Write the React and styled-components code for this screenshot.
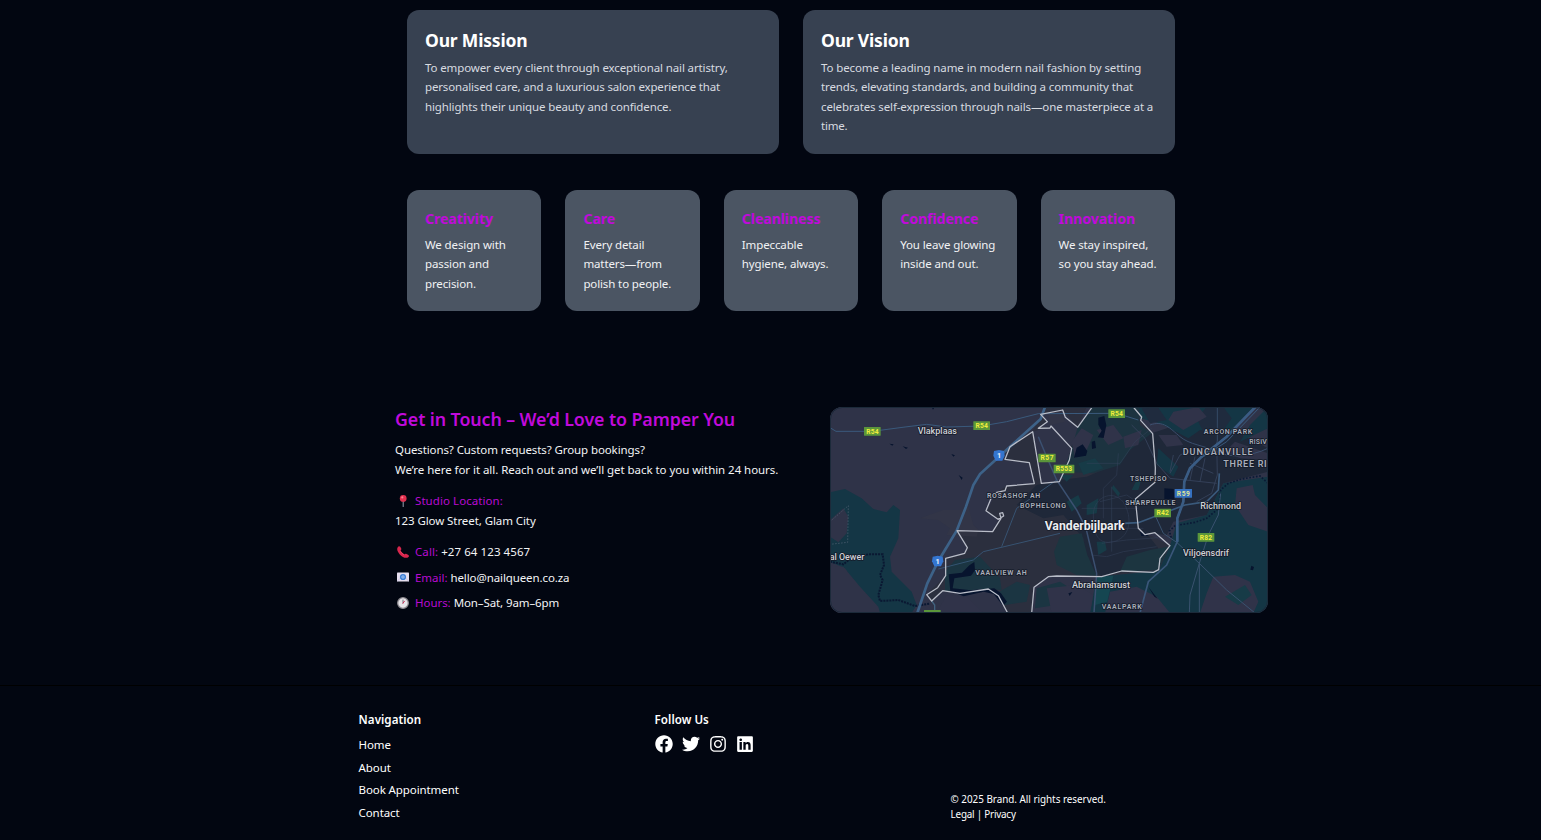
import React from "react";
import styled, { createGlobalStyle } from "styled-components";
import { FaFacebook, FaTwitter, FaInstagram, FaLinkedin } from "react-icons/fa";

const GlobalStyle = createGlobalStyle`
  *, *::before, *::after { box-sizing: border-box; }
  html { font-size: 12px; }
  body {
    margin: 0;
    height: 840px;
    overflow: hidden;
    background: #020611;
    color: #fff;
    font-family: "Segoe UI", "Noto Sans", "Open Sans", sans-serif;
    font-size: 11.5px;
    line-height: 19.5px;
    letter-spacing: -0.1px;
  }
  h2, h3, h4, p, ul { margin: 0; padding: 0; }
  ul { list-style: none; }
`;

const Page = styled.div`
  height: 840px;
  overflow: hidden;
`;

const About = styled.section`
  width: 768px;
  margin-left: 407px;
  padding-top: 10px;
  display: grid;
  gap: 36px;
`;

const Statements = styled.div`
  display: grid;
  grid-template-columns: repeat(2, 1fr);
  gap: 24px;
`;

const Values = styled.div`
  display: grid;
  grid-template-columns: repeat(5, 1fr);
  gap: 24px;
`;

const StatementCard = styled.article`
  height: 144px;
  padding: 18px;
  border-radius: 12px;
  background: #374151;
  color: #d8dbe0;
`;

const StatementTitle = styled.h3`
  margin-bottom: 5.6px;
  color: #fff;
  font-size: 17.5px;
  font-weight: 700;
  line-height: 24px;
  letter-spacing: -0.18px;
`;

const ValueCard = styled.article`
  height: 121px;
  padding: 18px;
  border-radius: 12px;
  background: #4b5563;
  color: #f1f2f4;
`;

const ValueTitle = styled.h4`
  margin-bottom: 5.6px;
  color: #c00adb;
  font-size: 14.25px;
  font-weight: 700;
  line-height: 21px;
  letter-spacing: -0.15px;
`;

const Line = styled.span`
  display: block;
  white-space: nowrap;
  letter-spacing: ${(p) => p.$track ?? -0.12}px;
`;

const Contact = styled.section`
  margin: 96px 0 0 395px;
  display: grid;
  grid-template-columns: 399px 438px;
  column-gap: 36px;
`;

const ContactTitle = styled.h2`
  margin-bottom: 9px;
  color: #c00adb;
  font-size: 17.8px;
  font-weight: 600;
  line-height: 24px;
  letter-spacing: -0.08px;
  white-space: nowrap;
`;

const Intro = styled.p`
  margin-bottom: 12px;
  color: #f3f4f6;
`;

const Details = styled.div`
  display: grid;
  gap: 6px;
  color: #f3f4f6;
`;

const Address = styled.div`
  margin-bottom: 6px;
`;

const Detail = styled.div`
  display: flex;
  align-items: center;
  height: 19.5px;
  white-space: nowrap;
`;

const Emoji = styled.svg`
  width: 12px;
  height: 12px;
  margin: 0 6px 0 2px;
  flex: none;
`;

const Label = styled.span`
  margin-right: 3px;
  color: #b80bd2;
  letter-spacing: ${(p) => p.$track ?? 0}px;
`;

const Value = styled.span`
  letter-spacing: ${(p) => p.$track ?? -0.1}px;
`;

const MapFrame = styled.div`
  height: 206px;
  border-radius: 12px;
  overflow: hidden;
  background: #2f3348;

  svg { display: block; width: 100%; height: 100%; }
  text { font-family: Roboto, "Noto Sans", sans-serif; letter-spacing: 0; }
`;

const Footer = styled.footer`
  margin-top: 72px;
  height: 155px;
  padding: 24px 0 0 358.6px;
  border-top: 1px solid #000;
  display: grid;
  grid-template-columns: repeat(3, 272px);
  align-items: start;
  column-gap: 24px;
`;

const FooterTitle = styled.h4`
  margin-bottom: 6px;
  padding-top: 1px;
  font-size: 11.6px;
  font-weight: 600;
  line-height: 18px;
  letter-spacing: 0.04px;
`;

const NavList = styled.ul`
  padding-top: 1px;
  display: grid;
  gap: 4.6px;
  line-height: 18px;
`;

const Socials = styled.div`
  display: flex;
  gap: 9px;

  svg { display: block; width: 18px; height: 18px; }
`;

const Legal = styled.div`
  margin-top: 82px;
  font-size: 9.9px;
  line-height: 15px;
`;

function Pin() {
  return (
    <Emoji viewBox="0 0 12 12">
      <path d="M6.200 6v5.600" stroke="#8b95a5" strokeWidth="1.100" strokeLinecap="round" />
      <circle cx="6.200" cy="3.400" r="3.400" fill="#e0304f" />
      <circle cx="5.300" cy="2.400" r="1.100" fill="#ff7f91" />
    </Emoji>
  );
}

function Phone() {
  return (
    <Emoji viewBox="0 0 12 12">
      <path
        d="M1.200.700C2.400-.3 3.300.4 4.200 2.400c.6 1.300-.6 1.500-.5 2.200.4 1.400 2 3 3.600 3.700.8.2 1-.9 2.200-.4 2.400 1 3 2 2 3-2.200 2.200-6 .3-8.500-2.200C.5 6.200-.9 2.600 1.200.700Z"
        fill="#d8264d"
      />
      <path d="M3.300 5.300c.8 1.500 2 2.700 3.600 3.400" stroke="#f24a6b" strokeWidth=".8" fill="none" />
    </Emoji>
  );
}

function Mail() {
  return (
    <Emoji viewBox="0 0 12 12">
      <rect x="0" y="1.600" width="12" height="9" rx=".6" fill="#e6dff0" />
      <path d="M0 10.400 4 6.500M12 10.400 8 6.500" stroke="#bdb4d4" strokeWidth=".6" />
      <circle cx="6" cy="6" r="3.100" fill="#3d7fd6" />
      <circle cx="6" cy="6" r="1.200" fill="none" stroke="#b7d3f7" strokeWidth=".8" />
    </Emoji>
  );
}

function Clock() {
  return (
    <Emoji viewBox="0 0 12 12">
      <circle cx="6" cy="6" r="5.300" fill="#e8e6ea" stroke="#8f8c92" strokeWidth="1.300" />
      <path d="M6 6.400V2.600" stroke="#55515a" strokeWidth=".8" />
      <path d="m5.700 6.600 2-2.700" stroke="#d0305a" strokeWidth="1" />
    </Emoji>
  );
}

const towns = [
  ["Vlakplaas", 322, 88, 27, 118],
  ["Richmond", 1172, 311, 27, 122],
  ["Viljoensdrif", 1128, 453, 27, 138],
  ["Abrahamsrust", 813, 548, 27, 174],
  ["al Oewer", 51, 464, 27, 104],
];

const suburbs = [
  ["ROSASHOF AH", 551, 280, 21, 160],
  ["BOPHELONG", 639, 310, 21, 138],
  ["TSHEPISO", 955, 228, 21, 110],
  ["SHARPEVILLE", 961, 300, 21, 151],
  ["VAALVIEW AH", 513, 511, 21, 155],
  ["VAALPARK", 875, 613, 21, 120],
  ["ARCON PARK", 1194, 88, 21, 145],
  ["RISIV", 1284, 118, 21, 53],
  ["DUNCANVILLE", 1163, 150, 27, 210],
  ["THREE RI", 1245, 187, 27, 130],
];

const shields = [
  ["R54", 127, 79, 50],
  ["R54", 455, 62, 50],
  ["R54", 860, 26, 50],
  ["R57", 651, 159, 52],
  ["R553", 702, 192, 62],
  ["R42", 998, 324, 50],
  ["R82", 1128, 397, 50],
  ["R59", 1060, 265, 52, "blue"],
  ["", 307, 628, 50],
];

function TownMap() {
  return (
    <svg viewBox="0 6 1314 618" preserveAspectRatio="none">
      <rect y="6" width="1314" height="618" fill="#2f3348" />

      {/* built-up and rural ground */}
      <path fill="#2b2f3e" d="M640 30 605 80 540 125 525 165 598 173 612 236 530 243 500 262 470 318 505 345 488 380 382 377 412 430 404 445 347 460V512L290 568 305 588 340 557 470 550 500 565 535 624H605L612 545 652 515 820 514 985 498 1020 422 950 385 920 340 918 290 975 230 965 85 900 6H640Z" />
      <path fill="#2f3348" d="M632 28 698 15 743 67 770 6H787L720 130 663 63 625 70 652 50ZM608 80 625 75 663 63 725 130 718 165 688 230 634 235Z" />
      <path fill="#1f2839" d="M690 225 770 215 840 185 870 130 965 85 1040 60 1180 60 1314 130V200L1180 235 1130 330 1030 350 1010 390 950 385 985 430 950 480 820 514 770 495 760 400 700 330 640 340 560 300 620 240Z" />
      <path fill="#1c3340" d="M787 6H925L930 60 965 85 900 135 870 180 790 205 700 200 725 130 743 67Z" />
      <path fill="#1c3540" d="M690 395 755 385 772 450 800 512 740 510 680 480 672 440ZM890 455 960 435 1015 425 985 495 870 500Z" />
      <path fill="#143645" d="M0 262 45 252 95 280 130 312 170 322 190 300 210 315 205 400 180 455 185 500 245 560 260 600 245 624H140L90 560 45 490 0 470Z" />
      <path fill="#2f3348" d="M0 345 40 310 55 335 50 385 25 412 0 395ZM0 482 40 485 90 545 145 605 150 624H0Z" />
      <path fill="#143645" d="M1060 6H1270L1190 90 1110 75 1075 100 990 55 930 40 925 6ZM1314 6V70L1230 110 1260 60ZM985 130 1045 185 1030 215 980 180Z" />
      <path fill="#1f2b3e" d="M1130 6H1180L1205 40 1170 90 1120 80 1100 40ZM935 10 985 8 1010 45 960 55Z" />
      <path fill="#143645" d="M1314 215V624H780L800 515 985 498 1020 422 1040 355 1130 330 1180 235Z" />
      <path fill="#154651" d="M800 515 850 512 832 590 795 600Z" />
      <path fill="#1b3542" d="M345 500 375 465 450 455 510 520 515 555 470 552 345 560ZM500 565 560 530 600 540 590 590 525 600ZM620 550 690 530 730 555 680 600 615 610Z" />

      {/* patches of farmland */}
      <g fill="#303349">
        <path d="M1220 250 1268 240 1275 270 1314 310V380L1255 360 1215 300ZM1130 565 1150 515 1215 510 1260 530 1285 590 1270 624H1110ZM840 560 920 545 980 575 1020 624H825ZM1030 20 1105 6 1130 35 1060 75 1015 45ZM800 75 850 60 880 100 835 120ZM880 95 935 75 925 120 885 130ZM650 550 740 540 790 570 780 624H665ZM985 90 1040 90 1060 120 1010 125Z" />
        <path d="M1185 140 1215 110 1314 145V165L1230 160ZM755 70 790 90 770 135 735 160 725 110ZM350 570 410 575 460 624H320Z" />
      </g>
      <g fill="#173b47">
        <path d="m745 175 50-15 25 30-60 20ZM770 300l35-20-5 45-30 5ZM710 290l35-20 10 25-30 25ZM800 410l25 0 5 25-25 15ZM850 240l20 25-5 10-20-25ZM905 255l20-40 10 5-10 35ZM690 210l40 0-20 20ZM1185 575l60-35 20 30-40 30Z" />
      </g>
      <path fill="#363846" opacity=".5" d="M340 315h60l15-10 15 55 15 15-5 20-90-5 10-20-35-25-55-5ZM655 25 690 15 705 50 660 60Z" />

      {/* water */}
      <g fill="#07142e">
        <path d="m805 38 18-5 6 28-8 38-18-2 12-20-10-18ZM740 128l18-10 14 20-4 14-36 6ZM785 110l10-3 3 22-12 3ZM1003 250l28 2 2 30h-30ZM356 508l40-5 22-22 15-10 2 25-12 16-50 8-5 30 55 6 70-6 20 15 18 25-12 12-28-35-30-7-60 14-40-15Z" />
        <path d="m178 116 13 2-4 4ZM218 124l16 4-6 4ZM364 147l11 4-5 4ZM386 210l12 8-3 7ZM1264 482l8 4-3 10-8-2ZM715 565l12-4-8 12ZM930 380l18 5 8 8-22 0ZM306 8h7l-4 6ZM955 545l28 36-10-6Z" />
      </g>
      <path d="M1314 235 1290 213 1235 222 1195 235 1172 255 1166 310 1130 340 1095 352 1035 362 1018 378 1024 400" fill="none" stroke="#0a1a36" strokeWidth="5" strokeDasharray="5 5" />
      <path d="M0 470 40 478 65 458 115 448 158 448 162 480 150 510 158 525 145 570 150 588 205 585 255 603 300 596" fill="none" stroke="#0a1832" strokeWidth="6" strokeDasharray="6 3" />
      <path d="M0 350 55 302 53 412 0 418" fill="none" stroke="#566779" strokeWidth="1.800" strokeDasharray="5 4" />

      {/* streets */}
      <g fill="none" stroke="#37435d" strokeWidth="2.600">
        <path d="M770 175H870L915 110 965 70M865 145 860 210 820 250V340M790 330C790 270 860 250 885 300S895 400 850 410 790 390 790 330M755 310H925M800 370H940M845 245V440M810 290 890 270 920 290M815 415 890 405 985 398M785 450 830 455 880 440 980 425" opacity=".55" />
        <path d="M905 60 945 100 980 175 1020 220 1160 235M1020 205 1050 150 1075 140M1080 175 1150 205M1095 155 1080 225M1125 160 1110 230M1160 110 1162 210 1145 265 1100 290M1030 150 1020 200" />
        <path d="M960 60C1000 45 1020 70 1050 95S1120 120 1160 140 1260 155 1314 130" stroke="#3f5575" />
        <path d="M975 330 1000 385 1040 412 1108 475 1190 555 1275 624M1135 390 1108 475V624M1108 475 1080 570 1078 624M1172 265 1165 330 1135 390" stroke="#3a526f" strokeWidth="3" />
        <path d="M1162 6V110" stroke="#3a526f" strokeWidth="2.500" />
      </g>

      {/* regional roads */}
      <g fill="none" stroke="#3a5a7c" strokeWidth="3">
        <path d="M0 68 18 79H127L225 66 290 58 350 66 455 63 530 50 625 26 860 25 925 45" />
        <path d="M625 95 650 155 680 225 740 315 768 370 800 505 792 624" strokeWidth="4.500" stroke="#3b5070" />
        <path d="M680 225 560 310 515 425M325 492 430 465 460 440 690 385" strokeWidth="2.500" />
        <path d="M880 355 925 353 980 332 1065 300 1130 290 1165 255 1168 205" strokeWidth="5" />
        <path d="M1276 6 1190 95 1115 155 1080 190 1063 230 1060 290 1042 340 1042 410 1010 480 955 530 930 624" strokeWidth="5" stroke="#3a5679" />
        <path d="M1276 6 1190 95 1115 155 1080 190 1063 230 1060 290 1042 340 1042 410" strokeWidth="8" stroke="#3a5c84" />
        <path d="M1290 6 1190 110 1115 158" strokeWidth="3" />
      </g>
      <path d="M645 6 632 42 540 125 507 155 450 207 430 240 408 305 380 377 325 468 292 535 262 624" fill="none" stroke="#3d6288" strokeWidth="8" />
      <path d="M305 588 314 600V624" fill="none" stroke="#41637f" strokeWidth="4" />

      {/* municipal boundary */}
      <g fill="none" stroke="#b9bdc8" strokeWidth="3.800" strokeLinejoin="round">
        <path d="M787 6 743 67 706 37 698 15 632 28 652 50 625 70 660 69 663 63 725 130 718 165 688 230 634 235 608 80 540 125 525 163 598 173 613 236 530 243 525 257 500 262 484 278 468 317 504 343 521 333 518 323 509 325 513 340 488 380 381 377 412 428 404 445 347 460V512L323 548 290 569 305 588 338 557 390 565 475 552 505 572 533 624" />
        <path d="M605 624 612 547 655 515 680 513 815 515 875 498 970 502 986 494 990 460 1020 422 975 383 945 389 925 370 916 282 975 232 976 188 968 86 932 46 935 36 910 6" />
      </g>

      {shields.map(([name, x, y, w, tone], i) => (
        <g key={i}>
          <rect x={x - w / 2} y={y - 13} width={w} height="26" rx="1" fill={tone ? "#3571c0" : "#5b963b"} />
          <text x={x} y={y + 7} fontSize="20" fontWeight="700" textAnchor="middle" fill={tone ? "#dfe49a" : "#f1ed3c"} textLength={name ? w - 13 : undefined}>
            {name}
          </text>
        </g>
      ))}
      {[[507, 151], [323, 468]].map(([x, y]) => (
        <g key={x}>
          <path d={`M${x - 15} ${y - 13}l15-3 15 3 2 14-7 15h-20l-7-15Z`} fill="#3475cf" />
          <text x={x} y={y + 8} fontSize="22" fontWeight="700" textAnchor="middle" fill="#eef3fb">1</text>
        </g>
      ))}

      <g textAnchor="middle" stroke="#151b29" strokeWidth="5" paintOrder="stroke" strokeLinejoin="round">
        {towns.map(([name, x, y, size, length]) => (
          <text key={name} x={x} y={y} fontSize={size} fontWeight="500" textLength={length} lengthAdjust="spacingAndGlyphs" fill="#cfd1d6">{name}</text>
        ))}
        {suburbs.map(([name, x, y, size, length]) => (
          <text key={name} x={x} y={y} fontSize={size} fontWeight="600" textLength={length} fill="#a9aeb9">{name}</text>
        ))}
        <text x="764" y="374" fontSize="37" fontWeight="700" textLength="240" lengthAdjust="spacingAndGlyphs" fill="#edeef1">Vanderbijlpark</text>
      </g>
      <rect x="1.500" y="7.500" width="1311" height="615" rx="35" fill="none" stroke="#1c2a3a" strokeWidth="3" />
    </svg>
  );
}

const statements = [
  {
    title: "Our Mission",
    lines: [
      ["To empower every client through exceptional nail artistry,", -0.12],
      ["personalised care, and a luxurious salon experience that", -0.16],
      ["highlights their unique beauty and confidence.", -0.13],
    ],
  },
  {
    title: "Our Vision",
    lines: [
      ["To become a leading name in modern nail fashion by setting", -0.1],
      ["trends, elevating standards, and building a community that", -0.13],
      ["celebrates self-expression through nails—one masterpiece at a", -0.12],
      ["time.", -0.2],
    ],
  },
];

const values = [
  { title: "Creativity", lines: ["We design with", "passion and", "precision."] },
  { title: "Care", lines: ["Every detail", "matters—from", "polish to people."] },
  { title: "Cleanliness", lines: ["Impeccable", "hygiene, always."] },
  { title: "Confidence", lines: ["You leave glowing", "inside and out."] },
  { title: "Innovation", lines: ["We stay inspired,", "so you stay ahead."] },
];

const navigation = ["Home", "About", "Book Appointment", "Contact"];

export default function App() {
  return (
    <Page>
      <GlobalStyle />
      <About>
        <Statements>
          {statements.map((s) => (
            <StatementCard key={s.title}>
              <StatementTitle>{s.title}</StatementTitle>
              <p>
                {s.lines.map(([text, track]) => (
                  <Line key={text} $track={track}>{text}</Line>
                ))}
              </p>
            </StatementCard>
          ))}
        </Statements>
        <Values>
          {values.map((v) => (
            <ValueCard key={v.title}>
              <ValueTitle>{v.title}</ValueTitle>
              <p>
                {v.lines.map((text) => (
                  <Line key={text}>{text}</Line>
                ))}
              </p>
            </ValueCard>
          ))}
        </Values>
      </About>

      <Contact>
        <div>
          <ContactTitle>Get in Touch – We’d Love to Pamper You</ContactTitle>
          <Intro>
            <Line $track={-0.1}>Questions? Custom requests? Group bookings?</Line>
            <Line $track={-0.05}>We’re here for it all. Reach out and we’ll get back to you within 24 hours.</Line>
          </Intro>
          <Details>
            <Address>
              <Detail><Pin /><Label $track={0.07}>Studio Location:</Label></Detail>
              <Detail><Value $track={-0.08}>123 Glow Street, Glam City</Value></Detail>
            </Address>
            <Detail><Phone /><Label $track={0.08}>Call:</Label><Value $track={0.08}>+27 64 123 4567</Value></Detail>
            <Detail><Mail /><Label $track={-0.03}>Email:</Label><Value>hello@nailqueen.co.za</Value></Detail>
            <Detail><Clock /><Label $track={-0.05}>Hours:</Label><Value>Mon–Sat, 9am–6pm</Value></Detail>
          </Details>
        </div>
        <MapFrame><TownMap /></MapFrame>
      </Contact>

      <Footer>
        <div>
          <FooterTitle>Navigation</FooterTitle>
          <NavList>
            {navigation.map((item) => <li key={item}>{item}</li>)}
          </NavList>
        </div>
        <div>
          <FooterTitle>Follow Us</FooterTitle>
          <Socials>
            <FaFacebook />
            <FaTwitter />
            <FaInstagram />
            <FaLinkedin />
          </Socials>
        </div>
        <Legal>
          <Line $track={-0.02}>© 2025 Brand. All rights reserved.</Line>
          <Line $track={-0.22}>Legal | Privacy</Line>
        </Legal>
      </Footer>
    </Page>
  );
}
